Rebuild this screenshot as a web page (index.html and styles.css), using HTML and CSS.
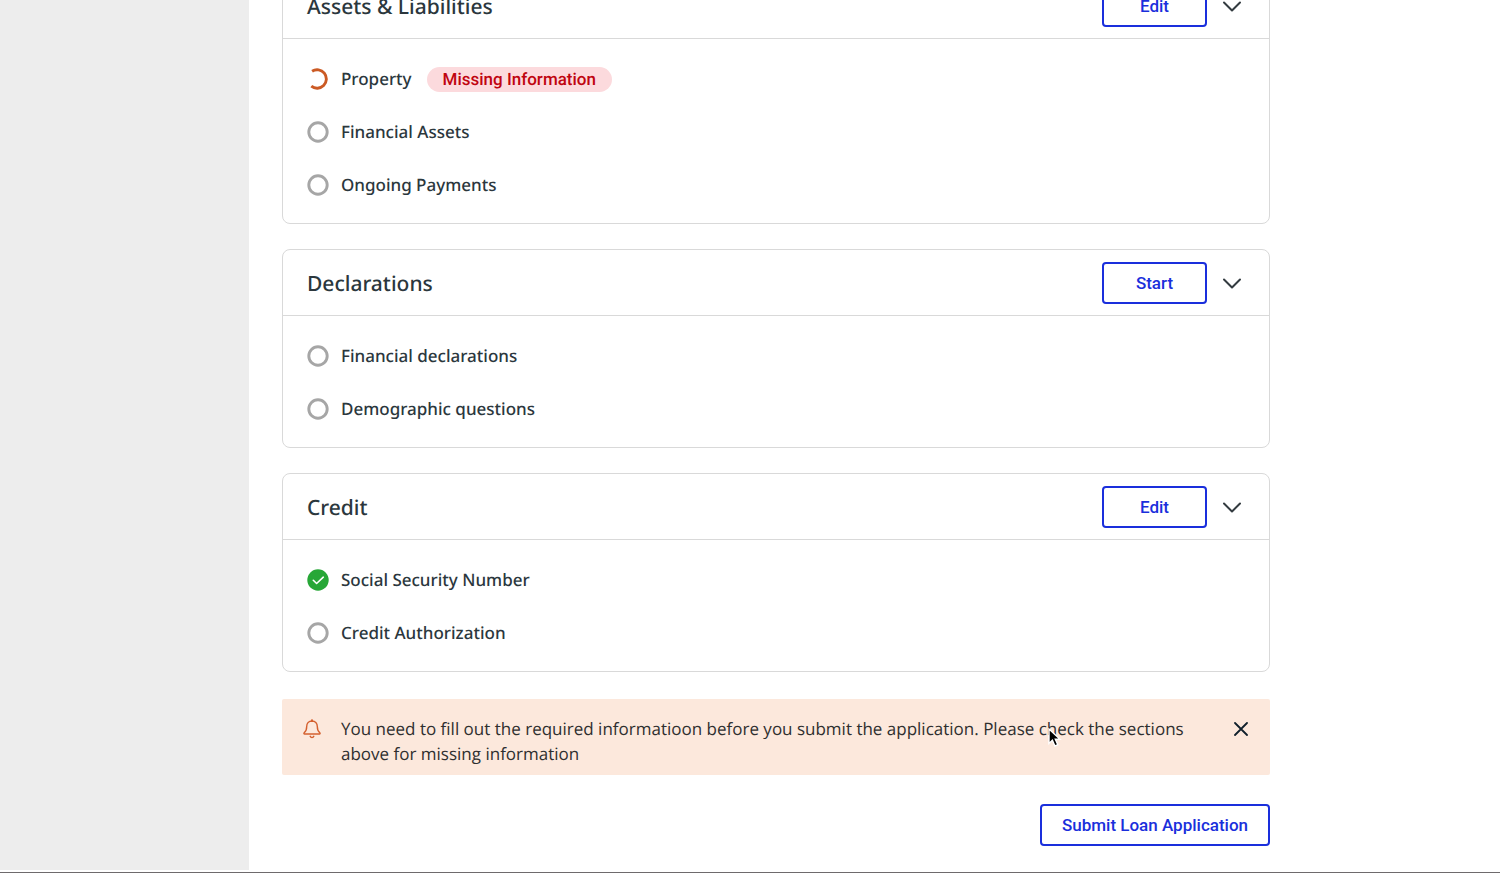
FILE: index.html
```html
<!DOCTYPE html>
<html lang="en">
<head>
<meta charset="utf-8">
<title>Loan Application</title>
<link rel="stylesheet" href="styles.css">
</head>
<body>
<svg class="sprite" aria-hidden="true">
  <symbol id="chevron" viewBox="0 0 20 20"><path d="M2 6.500 10 14.500 18 6.500" fill="none" stroke="#333b40" stroke-width="2" stroke-linecap="round" stroke-linejoin="round"/></symbol>
  <symbol id="empty" viewBox="0 0 22 22"><circle cx="11" cy="11" r="9.200" fill="none" stroke="#a6a6a6" stroke-width="2.900"/></symbol>
  <symbol id="partial" viewBox="0 0 22 22"><path d="M5.100 3.300 A9.200 9.200 0 1 1 4.300 18.100" fill="none" stroke="#cb5a24" stroke-width="2.900"/></symbol>
  <symbol id="done" viewBox="0 0 22 22"><circle cx="11" cy="11" r="10.700" fill="#27a737"/><path d="m6.300 11.300 3.300 3.200 6.700-6.300" fill="none" stroke="#fff" stroke-width="1.600" stroke-linecap="round" stroke-linejoin="round"/></symbol>
</svg>
<div class="app">
  <aside class="sidebar"></aside>
  <main class="content">
    <section class="card">
      <header class="card-header">
        <h2 class="card-title">Assets &amp; Liabilities</h2>
        <button class="button button-section" type="button">Edit</button>
        <button class="icon-button" type="button" aria-label="Toggle Assets and Liabilities"><svg class="chevron"><use href="#chevron"/></svg></button>
      </header>
      <ul class="steps">
        <li class="step"><svg class="status"><use href="#partial"/></svg><span class="step-name">Property</span><span class="tag">Missing Information</span></li>
        <li class="step"><svg class="status"><use href="#empty"/></svg><span class="step-name">Financial Assets</span></li>
        <li class="step"><svg class="status"><use href="#empty"/></svg><span class="step-name">Ongoing Payments</span></li>
      </ul>
    </section>
    <section class="card">
      <header class="card-header">
        <h2 class="card-title">Declarations</h2>
        <button class="button button-section" type="button">Start</button>
        <button class="icon-button" type="button" aria-label="Toggle Declarations"><svg class="chevron"><use href="#chevron"/></svg></button>
      </header>
      <ul class="steps">
        <li class="step"><svg class="status"><use href="#empty"/></svg><span class="step-name">Financial declarations</span></li>
        <li class="step"><svg class="status"><use href="#empty"/></svg><span class="step-name">Demographic questions</span></li>
      </ul>
    </section>
    <section class="card">
      <header class="card-header">
        <h2 class="card-title">Credit</h2>
        <button class="button button-section" type="button">Edit</button>
        <button class="icon-button" type="button" aria-label="Toggle Credit"><svg class="chevron"><use href="#chevron"/></svg></button>
      </header>
      <ul class="steps">
        <li class="step"><svg class="status"><use href="#done"/></svg><span class="step-name">Social Security Number</span></li>
        <li class="step"><svg class="status"><use href="#empty"/></svg><span class="step-name">Credit Authorization</span></li>
      </ul>
    </section>
    <div class="notice" role="alert">
      <svg class="bell" viewBox="0 0 20 20" fill="none" stroke="#d4602f" stroke-width="1.400" stroke-linejoin="round" stroke-linecap="round"><path d="M10 .8v1.200M10 2C6.800 2 4.700 4.400 4.700 7.500c0 3.500-.6 4.800-2.500 6.200-.6.600-.3 1.300.4 1.300h14.800c.7 0 1-.7.4-1.300-1.900-1.400-2.500-2.700-2.500-6.200C15.300 4.400 13.200 2 10 2Z"/><path d="M8.200 17.300c.3.900 1 1.300 1.800 1.300s1.500-.4 1.800-1.300"/></svg>
      <p class="notice-text">You need to fill out the required informatioon before you submit the application. Please check the sections above for missing information</p>
      <button class="icon-button" type="button" aria-label="Dismiss"><svg class="close" viewBox="0 0 14 14"><path d="m1 1 12 12M13 1 1 13" fill="none" stroke="#10202c" stroke-width="1.800" stroke-linecap="round"/></svg></button>
    </div>
    <button class="button button-submit" type="button">Submit Loan Application</button>
  </main>
  <svg class="cursor" viewBox="0 0 16 24" aria-hidden="true"><path d="M2 2v14.500l3.400-3.200 2.500 5.700 2.900-1.300-2.500-5.400H13Z" fill="#000" stroke="#fff" stroke-width="1.400"/></svg>
</div>
</body>
</html>
```

FILE: styles.css
```css
* {
  box-sizing: border-box;
}

body {
  margin: 0;
  background: #fff;
  color: #2b373d;
  font-family: "Open Sans", "Noto Sans", sans-serif;
  text-rendering: geometricPrecision;
}

.sprite {
  display: none;
}

.app {
  position: relative;
  display: flex;
  height: 100vh;
  overflow: hidden;
  border-bottom: 1px solid #6e6a6c;
}

.sidebar {
  flex: 0 0 249px;
  margin-bottom: 2px;
  background: #ededed;
}

.content {
  flex: 1;
  display: flex;
  flex-direction: column;
  justify-content: flex-end;
  max-width: 1021px;
  padding: 0 0 26px 33px;
}

.card {
  flex: none;
  margin-bottom: 25px;
  border: 1px solid #d9d9d9;
  border-radius: 8px;
}

.card-header {
  display: flex;
  align-items: center;
  height: 66px;
  padding: 0 27px 0 24px;
  border-bottom: 1px solid #d9d9d9;
}

.card-title {
  flex: 1;
  margin: 0;
  padding-top: 2px;
  font-family: "Noto Sans", sans-serif;
  font-size: 21px;
  line-height: 30px;
  font-weight: 500;
}

.button {
  height: 42px;
  border: 2px solid #1a2fdc;
  border-radius: 4px;
  background: #fff;
  color: #1a2fdc;
  font-family: Roboto, sans-serif;
  font-size: 17px;
  font-weight: 500;
}

.button-section {
  width: 105px;
  margin-right: 15px;
}

.button-submit {
  flex: none;
  align-self: flex-end;
  width: 230px;
  margin-top: 29px;
}

.icon-button {
  display: flex;
  padding: 0;
  border: 0;
  background: none;
}

.chevron {
  width: 20px;
  height: 20px;
}

.steps {
  display: flex;
  flex-direction: column;
  gap: 25px;
  margin: 0;
  padding: 26px 24px 24px;
  list-style: none;
}

.step {
  display: flex;
  align-items: center;
  height: 28px;
  font-size: 17px;
  font-weight: 500;
}

.step-name {
  padding-bottom: 2px;
  font-family: "Noto Sans", sans-serif;
}

.status {
  width: 22px;
  height: 22px;
  margin-right: 12px;
}

.tag {
  margin-left: 15px;
  padding: 1px 16px 0;
  border-radius: 13px;
  background: #fcdadd;
  color: #c00510;
  font-family: Roboto, sans-serif;
  line-height: 24px;
}

.notice {
  flex: none;
  display: flex;
  align-items: flex-start;
  margin-top: 2px;
  padding: 17px 22px 9px 20px;
  border-radius: 2px;
  background: #fce8dc;
  color: #2f2f2f;
}

.bell {
  flex: none;
  width: 20px;
  height: 20px;
  margin: 3px 19px 0 0;
}

.notice-text {
  flex: 1;
  margin: 0 36px 0 0;
  font-size: 17px;
  line-height: 25px;
}

.close {
  width: 14px;
  height: 14px;
  margin: 6px 0;
}

.cursor {
  position: absolute;
  left: 1047px;
  top: 727px;
  width: 16px;
  height: 24px;
}
```
